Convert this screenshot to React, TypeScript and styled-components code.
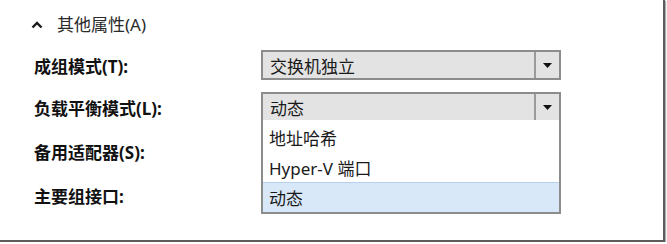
import React from 'react';
import styled, { createGlobalStyle } from 'styled-components';

const GlobalStyle = createGlobalStyle`
  html, body {
    margin: 0;
    padding: 0;
    background: #ffffff;
  }
  body {
    font-family: "Noto Sans", "Noto Sans CJK SC", sans-serif;
    color: #1a1a1a;
  }
`;

const rows = [
  { label: '成组模式(T):', value: '交换机独立' },
  { label: '负载平衡模式(L):', value: '动态', open: true },
  { label: '备用适配器(S):' },
  { label: '主要组接口:' },
];

const options = ['地址哈希', 'Hyper-V 端口', '动态'];

const App: React.FC = () => {
  return (
    <>
      <GlobalStyle />
      <Frame>
        <SectionHeader>
          <Chevron viewBox="0 0 12 8" aria-hidden>
            <path d="M1.5 6.5 L6 2 L10.5 6.5" fill="none" stroke="#1a1a1a" strokeWidth="2.4" />
          </Chevron>
          <SectionTitle>其他属性(A)</SectionTitle>
        </SectionHeader>

        <Form>
          {rows.map((row) => (
            <React.Fragment key={row.label}>
              <Label>{row.label}</Label>
              <Field>
                {row.value && (
                  <Select>
                    <SelectValue>{row.value}</SelectValue>
                    <SelectButton>
                      <svg width="9" height="5" viewBox="0 0 9 5" aria-hidden>
                        <path d="M0 0 H9 L4.5 5 Z" fill="#111" />
                      </svg>
                    </SelectButton>
                  </Select>
                )}
                {row.open && (
                  <Menu>
                    {options.map((opt) => (
                      <MenuItem key={opt} $selected={opt === row.value}>
                        {opt}
                      </MenuItem>
                    ))}
                  </Menu>
                )}
              </Field>
            </React.Fragment>
          ))}
        </Form>
      </Frame>
    </>
  );
};

const Frame = styled.div`
  width: 665px;
  height: 242px;
  box-sizing: border-box;
  border-right: 2px solid #5c5c5c;
  border-bottom: 2px solid #5c5c5c;
  box-shadow: 1px 1px 1px #b0b0b0;
  padding: 14px 0 0 31px;
`;

const SectionHeader = styled.div`
  display: flex;
  align-items: center;
  gap: 14px;
  height: 22px;
`;

const Chevron = styled.svg`
  width: 12px;
  height: 8px;
`;

const SectionTitle = styled.span`
  font-size: 17px;
  color: #2a2a2a;
  line-height: 22px;
`;

const Form = styled.div`
  display: grid;
  grid-template-columns: 227px 300px;
  grid-template-rows: 30px 30px 34px 30px;
  row-gap: 12px;
  margin-top: 14px;
  padding-left: 3px;
`;

const Label = styled.div`
  display: flex;
  align-items: center;
  font-size: 17px;
  font-weight: 700;
  color: #111;
`;

const Field = styled.div`
  position: relative;
`;

const Select = styled.div`
  display: flex;
  height: 30px;
  box-sizing: border-box;
  border: 2px solid #8c8c8c;
  background: #e3e3e3;
`;

const SelectValue = styled.div`
  flex: 1;
  display: flex;
  align-items: center;
  padding-left: 7px;
  font-size: 17px;
  color: #1a1a1a;
`;

const SelectButton = styled.div`
  width: 23px;
  display: flex;
  align-items: center;
  justify-content: center;
  border-left: 2px solid #9a9a9a;
`;

const Menu = styled.div`
  position: absolute;
  top: 28px;
  left: 0;
  width: 300px;
  box-sizing: border-box;
  border: 2px solid #8c8c8c;
  border-top: none;
  background: #ffffff;
  padding-top: 2px;
  z-index: 2;
`;

const MenuItem = styled.div<{ $selected?: boolean }>`
  height: 29px;
  display: flex;
  align-items: center;
  padding-left: 6px;
  font-size: 17px;
  color: #1a1a1a;
  background: ${(p) => (p.$selected ? '#d9e8f9' : 'transparent')};
  border-top: 1px solid ${(p) => (p.$selected ? '#b5cfee' : 'transparent')};
`;

export default App;
